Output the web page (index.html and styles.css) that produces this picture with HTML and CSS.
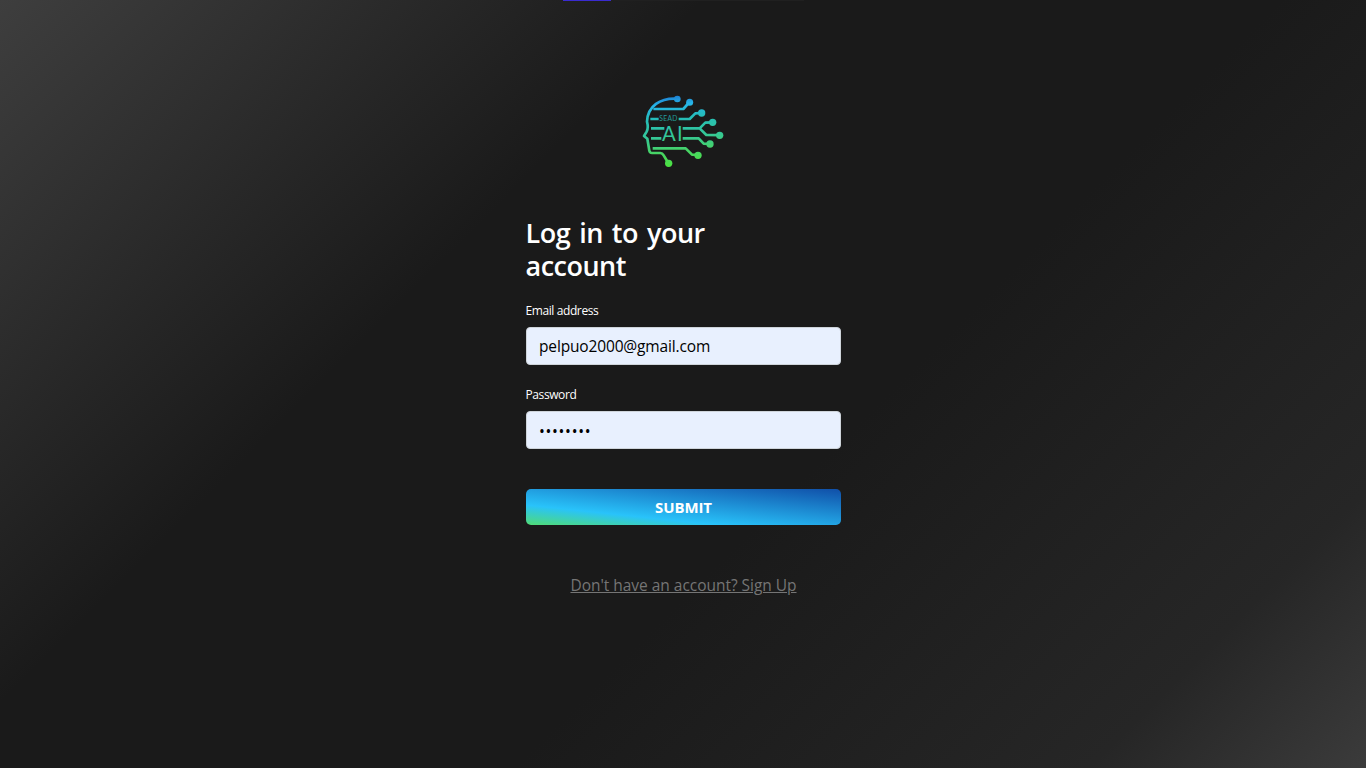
FILE: index.html
```html
<!DOCTYPE html>
<html lang="en">
<head>
<meta charset="utf-8">
<title>Log in</title>
<link rel="stylesheet" href="styles.css">
</head>
<body>
<div class="tab-strip"><span class="tab-active"></span></div>
<main class="login">
  <svg class="logo" viewBox="0 0 300 270" aria-label="SEAD AI">
    <defs>
      <linearGradient id="brand" gradientUnits="userSpaceOnUse" x1="110" y1="28" x2="125" y2="242">
        <stop offset="0" stop-color="#1c79cf"/>
        <stop offset=".13" stop-color="#27b5e8"/>
        <stop offset=".32" stop-color="#25bdb9"/>
        <stop offset=".57" stop-color="#34c798"/>
        <stop offset=".78" stop-color="#46d368"/>
        <stop offset="1" stop-color="#4ce33f"/>
      </linearGradient>
    </defs>
    <g fill="none" stroke="url(#brand)" stroke-width="8" stroke-linejoin="round">
      <path d="M132 38C82 35 44 60 42 107Q47 126 41 137L33 150L43 158L49 194Q50 201 57 201H82Q88 201 92 208L104 228"/>
      <path d="M61 69H151L167 51"/>
      <path d="M52 99H77M137 99H170L187 82L204 81"/>
      <path d="M54 127H94M149 127H200L217 110L238 109M200 127L220 147L260 147.500"/>
      <path d="M54 157H85M149 157H197L212 173L231 174"/>
      <path d="M59 187H158L177 206L195 207"/>
    </g>
    <g fill="url(#brand)">
      <circle cx="133" cy="39" r="10"/><circle cx="170" cy="49" r="10.500"/><circle cx="206" cy="81" r="11"/>
      <circle cx="239" cy="109" r="11"/><circle cx="260" cy="148" r="11"/><circle cx="231" cy="174" r="11"/>
      <circle cx="195" cy="208" r="11"/><circle cx="107" cy="232" r="11"/>
      <text class="logo-small" x="79" y="106" textLength="54">SEAD</text>
      <text class="logo-large" x="87" y="164">A</text><text class="logo-large" x="132" y="164">I</text>
    </g>
  </svg>
  <h1 class="title">Log in to your account</h1>
  <form class="form">
    <label class="label" for="email">Email address</label>
    <input class="input" id="email" type="text" value="pelpuo2000@gmail.com">
    <label class="label" for="password">Password</label>
    <input class="input password" id="password" type="text" value="••••••••">
    <button class="submit" type="button">SUBMIT</button>
  </form>
  <a class="signup" href="#">Don't have an account? Sign Up</a>
</main>
</body>
</html>
```
FILE: styles.css
```css
* { box-sizing: border-box; }
body {
  margin: 0;
  height: 768px;
  overflow: hidden;
  font-family: "Open Sans", "Noto Sans", sans-serif;
  font-size: 16px;
  color: #fff;
  background: linear-gradient(135deg, #3e3e3e 0%, #1a1a1a 33%, #1a1a1a 60%, #262626 87%, #3b3b3b 100%);
}
.tab-strip { width: 241px; height: 1px; margin-left: 563px; background: #202020; }
.tab-active { display: block; width: 48px; height: 1px; background: #3a2bd0; }
.login { width: 315px; margin: 85px 0 0 526px; display: flex; flex-direction: column; }
.logo { width: 100px; height: 90px; margin-left: 107px; }
.logo-small { font: 20px Lato, sans-serif; opacity: .8; }
.logo-large { font: 61px Lato, sans-serif; }
.title { width: 220px; margin: 40px 0 1px -0.5px; font-size: 27px; line-height: 33px; font-weight: 600; letter-spacing: -0.5px; word-spacing: 2.5px; }
.form { display: flex; flex-direction: column; }
.label { margin: 18px 0 0 -0.5px; height: 19px; font-size: 12px; line-height: 19px; letter-spacing: -0.4px; }
.input {
  width: 315px; height: 38px; margin: 7px 0 0; padding: 0 12px;
  border: 1px solid #ced4da; border-radius: 4px; background: #e8f0fe;
  color: #000; font: 15.500px "Open Sans", sans-serif; letter-spacing: -0.15px;
}
.input + .label { margin-top: 20px; }
.password { padding-top: 2px; letter-spacing: 0.7px; }
.submit {
  height: 36px; margin-top: 40px; padding: 0 0 1px; border: 0; border-radius: 5px;
  background: linear-gradient(6deg, #50dc75 0%, #29c3fa 29%, #104fa8 100%);
  color: #fff; font: 700 15px "Open Sans", sans-serif; letter-spacing: -0.1px;
}
.signup { align-self: center; margin: 48px 0 0; line-height: 24px; font-size: 15.500px; color: #757575; letter-spacing: -0.03px; }
```
